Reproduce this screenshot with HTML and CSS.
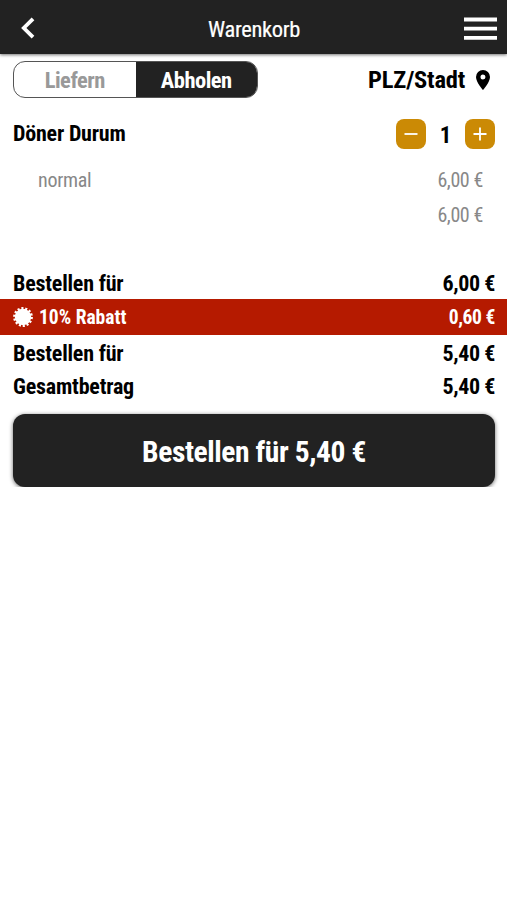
FILE: index.html
```html
<!DOCTYPE html>
<html lang="de">
<head>
<meta charset="utf-8">
<title>Warenkorb</title>
<link rel="stylesheet" href="styles.css">
</head>
<body>
<header class="bar">
  <svg class="back" width="14" height="22" viewBox="0 0 14 22"><path d="M12 1.800 2.800 11 12 20.200" fill="none" stroke="#fff" stroke-width="3.800"/></svg>
  <h1>Warenkorb</h1>
  <svg class="menu" width="33" height="24" viewBox="0 0 33 24"><path d="M0 2.500h33M0 11.700h33M0 20.900h33" stroke="#fff" stroke-width="3.800"/></svg>
</header>
<main>
  <div class="top">
    <div class="toggle"><span class="off">Liefern</span><span class="on">Abholen</span></div>
    <div class="place"><span>PLZ/Stadt</span><svg width="14" height="20" viewBox="0 0 14 20"><path fill="#000" fill-rule="evenodd" d="M7 0a7 7 0 0 0-7 7c0 5.200 7 13 7 13s7-7.800 7-13a7 7 0 0 0-7-7Zm0 9.500a2.500 2.500 0 1 1 0-5 2.500 2.500 0 0 1 0 5Z"/></svg></div>
  </div>
  <div class="item">
    <span>Döner Durum</span>
    <div class="qty">
      <button class="step"><svg width="14" height="14" viewBox="0 0 14 14"><path d="M.5 7h13" stroke="#fff" stroke-width="1.800"/></svg></button>
      <span class="count">1</span>
      <button class="step"><svg width="14" height="14" viewBox="0 0 14 14"><path d="M.5 7h13M7 .5v13" stroke="#fff" stroke-width="1.800"/></svg></button>
    </div>
  </div>
  <div class="sub"><span>normal</span><span class="price">6,00 €</span></div>
  <div class="sub total"><span class="price">6,00 €</span></div>
  <div class="row first"><span>Bestellen für</span><span class="price">6,00 €</span></div>
  <div class="rabatt">
    <svg width="20" height="20" viewBox="-10 -10 20 20"><circle r="8.200" fill="#fff"/><circle r="8.600" fill="none" stroke="#fff" stroke-width="2.600" stroke-dasharray="2.100 1.760"/></svg>
    <span>10% Rabatt</span><span class="price">0,60 €</span>
  </div>
  <div class="row after"><span>Bestellen für</span><span class="price">5,40 €</span></div>
  <div class="row"><span>Gesamtbetrag</span><span class="price">5,40 €</span></div>
  <button class="order">Bestellen für 5,40 €</button>
</main>
</body>
</html>
```
FILE: styles.css
```css
* { box-sizing: border-box; }
body, button { font-family: "Roboto Condensed", Roboto, sans-serif; font-stretch: 75%; }
body { margin: 0; background: #fff; color: #000; }
button { border: 0; padding: 0; color: #fff; }
svg { display: block; flex: none; }
.bar {
  height: 54px; padding: 3px 10px 0 21px; background: #222; color: #fff;
  display: grid; grid-template-columns: 55px 1fr 65px; align-items: center;
  box-shadow: 0 1px 3px rgba(0, 0, 0, .55);
}
.bar h1 { margin: 1px 0 0; font-size: 22.500px; font-weight: 400; letter-spacing: -.35px; text-align: center; -webkit-text-stroke: .2px #fff; }
.back { margin-top: -1px; }
.menu { justify-self: end; }
.top { height: 55px; padding: 7px 17px 0 13px; display: flex; justify-content: space-between; align-items: flex-start; }
.toggle { width: 245px; height: 37px; display: flex; border: 1px solid #555; border-radius: 12px; overflow: hidden; font-size: 22.500px; font-weight: 700; letter-spacing: -.5px; line-height: 37px; text-align: center; }
.toggle span { flex: 1; }
.off { color: #999; }
.on { background: #222; color: #fff; }
.place { height: 37px; display: flex; align-items: center; gap: 11px; font-size: 24.500px; font-weight: 700; letter-spacing: -.2px; }
.item { height: 50px; padding: 0 12px 0 13px; display: flex; justify-content: space-between; align-items: center; font-size: 22px; font-weight: 700; letter-spacing: -.2px; }
.item > span { margin-top: -2px; }
.qty { display: flex; align-items: center; }
.step { width: 30px; height: 30px; border-radius: 8px; background: #cb8a05; display: flex; align-items: center; justify-content: center; }
.count { width: 39px; padding-top: 3px; text-align: center; font-size: 23px; line-height: 30px; }
.sub { height: 35px; margin-top: 4px; padding: 0 24px 2px 38px; display: flex; justify-content: space-between; align-items: center; color: #888; font-size: 20px; letter-spacing: -.3px; }
.total { margin-top: 0; justify-content: flex-end; }
.row { height: 33px; padding: 0 12px 0 13px; display: flex; justify-content: space-between; align-items: center; font-size: 22px; font-weight: 700; letter-spacing: -.2px; }
.price { letter-spacing: -.4px; }
.first { margin-top: 33px; padding-top: 2px; }
.rabatt { height: 36px; padding: 0 12px 0 13px; display: flex; align-items: center; gap: 6px; background: #b51a00; color: #fff; font-size: 19.500px; font-weight: 700; }
.rabatt .price { margin-left: auto; }
.after { margin-top: 2px; }
.order { display: block; width: 482px; height: 73px; margin: 11px 12px 0 13px; padding-top: 2px; border-radius: 12px; background: #222; font-size: 29.500px; font-weight: 700; letter-spacing: -.4px; box-shadow: 0 1px 4px rgba(0, 0, 0, .6); }
```
